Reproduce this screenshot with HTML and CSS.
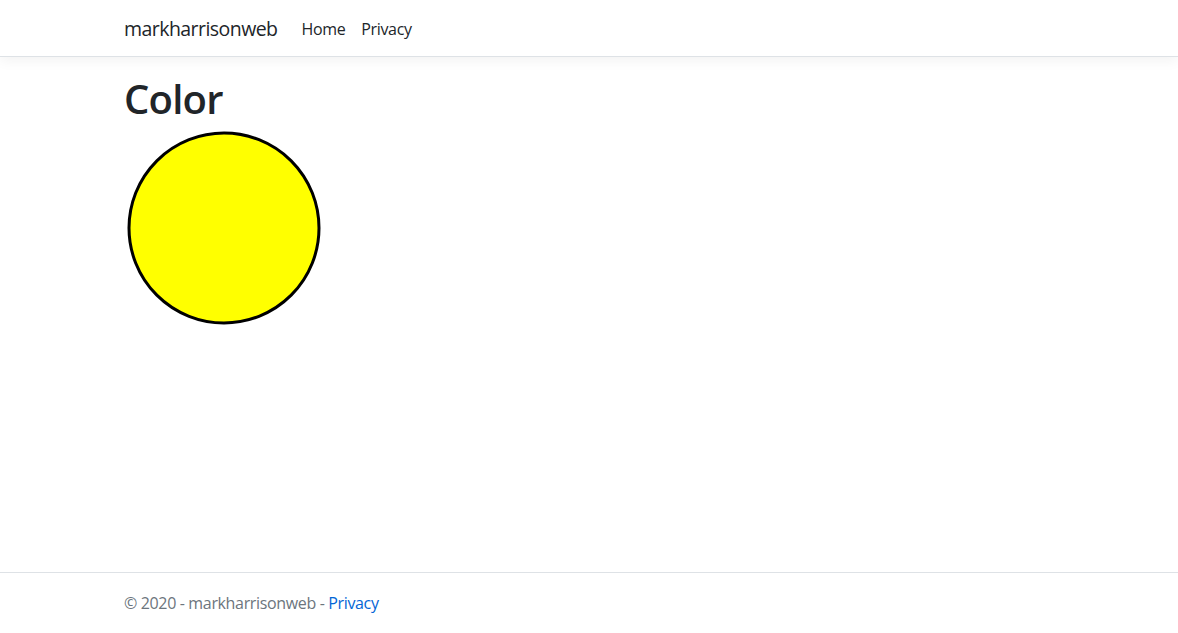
FILE: index.html
```html
<!DOCTYPE html>
<html lang="en">
<head>
<meta charset="utf-8">
<title>Color - markharrisonweb</title>
<link rel="stylesheet" href="styles.css">
</head>
<body>
<header>
  <nav class="navbar">
    <div class="container nav-inner">
      <a class="brand" href="#">markharrisonweb</a>
      <ul class="nav-list">
        <li><a class="nav-link" href="#">Home</a></li>
        <li><a class="nav-link" href="#">Privacy</a></li>
      </ul>
    </div>
  </nav>
</header>
<main class="container main">
  <h1 class="title">Color</h1>
  <svg class="swatch" width="200" height="200" viewBox="0 0 200 200">
    <circle cx="100" cy="100" r="95" fill="#ffff00" stroke="#000" stroke-width="3"/>
  </svg>
</main>
<footer class="footer">
  <div class="container">
    © 2020 - markharrisonweb - <a class="footer-link" href="#">Privacy</a>
  </div>
</footer>
</body>
</html>
```
FILE: styles.css
```css
* { box-sizing: border-box; }
html, body { margin: 0; padding: 0; }
body {
  font-family: "Segoe UI", "Open Sans", "Noto Sans", sans-serif;
  font-size: 16px;
  line-height: 1.5;
  letter-spacing: -0.35px;
  color: #212529;
  background: #fff;
  min-height: 100vh;
  display: flex;
  flex-direction: column;
}
a { text-decoration: none; }
.container {
  width: 100%;
  max-width: 960px;
  margin: 0 auto;
  padding: 0 15px;
}
.navbar {
  padding: 9px 16px 7px;
  background: #fff;
  border-bottom: 1px solid #dee2e6;
  box-shadow: 0 4px 12px rgba(0,0,0,.05);
  margin-bottom: 16px;
}
.nav-inner {
  display: flex;
  align-items: center;
}
.brand {
  font-size: 19.5px;
  line-height: 30px;
  letter-spacing: -0.55px;
  padding: 5px 0;
  margin-right: 16px;
  color: #212529;
}
.nav-list {
  display: flex;
  list-style: none;
  margin: 0;
  padding: 0;
}
.nav-link {
  display: block;
  padding: 8px;
  color: #212529;
}
.main { flex: 1; }
.title {
  font-size: 40px;
  font-weight: 600;
  line-height: 1.2;
  letter-spacing: -0.8px;
  margin: 0 0 6px;
  padding-top: 2px;
}
.swatch { display: block; margin-top: -1px; }
.footer {
  border-top: 1px solid #dee2e6;
  line-height: 60px;
  white-space: nowrap;
  color: #6c757d;
}
.footer-link { color: #0366d6; }
```
